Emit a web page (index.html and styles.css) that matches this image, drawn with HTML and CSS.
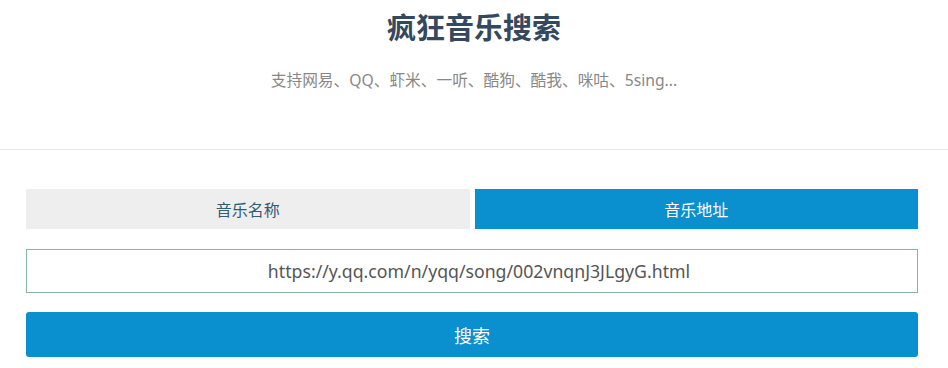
FILE: index.html
```html
<!DOCTYPE html>
<html lang="zh-CN">
<head>
    <meta charset="UTF-8">
    <title>疯狂音乐搜索</title>
    <link rel="stylesheet" href="styles.css">
</head>
<body>
    <header class="header">
        <h1 class="title">疯狂音乐搜索</h1>
        <p class="subtitle">支持网易、QQ、虾米、一听、酷狗、酷我、咪咕、5sing...</p>
    </header>

    <main class="search">
        <div class="tabs">
            <button class="tab">音乐名称</button>
            <button class="tab active">音乐地址</button>
        </div>
        <input class="search-input" type="text" value="https://y.qq.com/n/yqq/song/002vnqnJ3JLgyG.html">
        <button class="search-btn">搜索</button>
    </main>
</body>
</html>
```

FILE: styles.css
```css
* {
    box-sizing: border-box;
}

body {
    margin: 0;
    background: #fff;
    font-family: "Noto Sans", "Noto Sans CJK SC", sans-serif;
}

.header {
    height: 150px;
    border-bottom: 1px solid #e8e8e8;
    text-align: center;
    padding-top: 9px;
}

.title {
    margin: 0;
    font-size: 29px;
    line-height: 38px;
    font-weight: bold;
    color: #34495e;
}

.subtitle {
    margin: 23px 0 0;
    font-size: 15.7px;
    line-height: 20px;
    color: #888;
}

.search {
    width: 892px;
    margin-left: 26px;
    padding-top: 39px;
    display: flex;
    flex-direction: column;
}

.tabs {
    display: flex;
    gap: 5px;
}

.tab {
    flex: 1;
    height: 40px;
    border: none;
    background: #eee;
    color: #2f5d73;
    font-family: inherit;
    font-size: 16px;
}

.tab.active {
    background: #0a8fcf;
    color: #fff;
}

.search-input {
    margin-top: 20px;
    height: 44px;
    padding: 0 0 0 14px;
    border: 1px solid #86b6a4;
    text-align: center;
    font-family: inherit;
    font-size: 17.7px;
    color: #555;
}

.search-btn {
    margin-top: 19px;
    height: 45px;
    border: none;
    border-radius: 3px;
    background: #0a8fcf;
    color: #fff;
    font-family: inherit;
    font-size: 18px;
}
```
